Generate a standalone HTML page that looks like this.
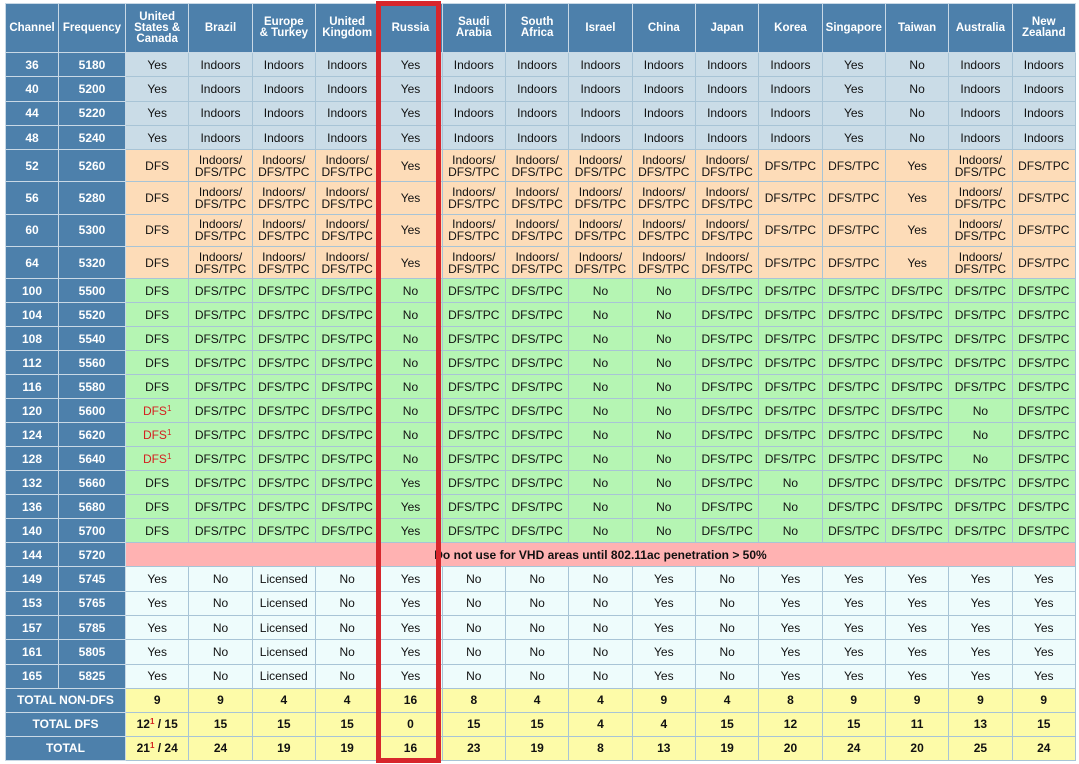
<!DOCTYPE html>
<html><head><meta charset="utf-8"><style>
body{margin:0;background:#fff;width:1079px;height:764px;overflow:hidden;position:relative;font-family:"Liberation Sans",sans-serif}
table{position:absolute;left:5px;top:3px;width:1070px;border-collapse:collapse;table-layout:fixed}
td,th{border:1px solid #a8c4d6;text-align:center;padding:0;font-size:12px;color:#111;line-height:12px;overflow:hidden;white-space:nowrap}
th{background:#4d80ab;color:#fff;font-weight:bold;font-size:11.5px;line-height:11px;height:48px;border-color:#c9d9e6}
td.h{background:#4d80ab;color:#fff;font-weight:bold;border-color:#c9d9e6}
tr.b td{background:#cadce7;height:23.3px}
tr.o td{background:#fddcb8;height:31.3px}
tr.g td{background:#b5f5b3;height:23px}
tr.p td{background:#ffb2b2;height:23px}
tr.w td{background:#eefcfc;height:23.3px}
tr.y td{background:#fdfba8;height:23px;font-weight:bold}
tr td.h{background:#4d80ab}
.r{color:#d42020}
sup{font-size:8px;color:#d42020;vertical-align:4px;line-height:0}
#box{position:absolute;left:376px;top:1px;width:65px;height:762px;border:5px solid #d7262c;box-sizing:border-box}
</style></head><body>
<table>
<colgroup><col style="width:53px"><col style="width:67px"><col span="15" style="width:63.33px"></colgroup>
<tr><th>Channel</th><th>Frequency</th><th>United<br>States &amp;<br>Canada</th><th>Brazil</th><th>Europe<br>&amp; Turkey</th><th>United<br>Kingdom</th><th>Russia</th><th>Saudi<br>Arabia</th><th>South<br>Africa</th><th>Israel</th><th>China</th><th>Japan</th><th>Korea</th><th>Singapore</th><th>Taiwan</th><th>Australia</th><th>New<br>Zealand</th></tr>
<tr class="b"><td class="h">36</td><td class="h">5180</td><td>Yes</td><td>Indoors</td><td>Indoors</td><td>Indoors</td><td>Yes</td><td>Indoors</td><td>Indoors</td><td>Indoors</td><td>Indoors</td><td>Indoors</td><td>Indoors</td><td>Yes</td><td>No</td><td>Indoors</td><td>Indoors</td></tr>
<tr class="b"><td class="h">40</td><td class="h">5200</td><td>Yes</td><td>Indoors</td><td>Indoors</td><td>Indoors</td><td>Yes</td><td>Indoors</td><td>Indoors</td><td>Indoors</td><td>Indoors</td><td>Indoors</td><td>Indoors</td><td>Yes</td><td>No</td><td>Indoors</td><td>Indoors</td></tr>
<tr class="b"><td class="h">44</td><td class="h">5220</td><td>Yes</td><td>Indoors</td><td>Indoors</td><td>Indoors</td><td>Yes</td><td>Indoors</td><td>Indoors</td><td>Indoors</td><td>Indoors</td><td>Indoors</td><td>Indoors</td><td>Yes</td><td>No</td><td>Indoors</td><td>Indoors</td></tr>
<tr class="b"><td class="h">48</td><td class="h">5240</td><td>Yes</td><td>Indoors</td><td>Indoors</td><td>Indoors</td><td>Yes</td><td>Indoors</td><td>Indoors</td><td>Indoors</td><td>Indoors</td><td>Indoors</td><td>Indoors</td><td>Yes</td><td>No</td><td>Indoors</td><td>Indoors</td></tr>
<tr class="o"><td class="h">52</td><td class="h">5260</td><td>DFS</td><td>Indoors/<br>DFS/TPC</td><td>Indoors/<br>DFS/TPC</td><td>Indoors/<br>DFS/TPC</td><td>Yes</td><td>Indoors/<br>DFS/TPC</td><td>Indoors/<br>DFS/TPC</td><td>Indoors/<br>DFS/TPC</td><td>Indoors/<br>DFS/TPC</td><td>Indoors/<br>DFS/TPC</td><td>DFS/TPC</td><td>DFS/TPC</td><td>Yes</td><td>Indoors/<br>DFS/TPC</td><td>DFS/TPC</td></tr>
<tr class="o"><td class="h">56</td><td class="h">5280</td><td>DFS</td><td>Indoors/<br>DFS/TPC</td><td>Indoors/<br>DFS/TPC</td><td>Indoors/<br>DFS/TPC</td><td>Yes</td><td>Indoors/<br>DFS/TPC</td><td>Indoors/<br>DFS/TPC</td><td>Indoors/<br>DFS/TPC</td><td>Indoors/<br>DFS/TPC</td><td>Indoors/<br>DFS/TPC</td><td>DFS/TPC</td><td>DFS/TPC</td><td>Yes</td><td>Indoors/<br>DFS/TPC</td><td>DFS/TPC</td></tr>
<tr class="o"><td class="h">60</td><td class="h">5300</td><td>DFS</td><td>Indoors/<br>DFS/TPC</td><td>Indoors/<br>DFS/TPC</td><td>Indoors/<br>DFS/TPC</td><td>Yes</td><td>Indoors/<br>DFS/TPC</td><td>Indoors/<br>DFS/TPC</td><td>Indoors/<br>DFS/TPC</td><td>Indoors/<br>DFS/TPC</td><td>Indoors/<br>DFS/TPC</td><td>DFS/TPC</td><td>DFS/TPC</td><td>Yes</td><td>Indoors/<br>DFS/TPC</td><td>DFS/TPC</td></tr>
<tr class="o"><td class="h">64</td><td class="h">5320</td><td>DFS</td><td>Indoors/<br>DFS/TPC</td><td>Indoors/<br>DFS/TPC</td><td>Indoors/<br>DFS/TPC</td><td>Yes</td><td>Indoors/<br>DFS/TPC</td><td>Indoors/<br>DFS/TPC</td><td>Indoors/<br>DFS/TPC</td><td>Indoors/<br>DFS/TPC</td><td>Indoors/<br>DFS/TPC</td><td>DFS/TPC</td><td>DFS/TPC</td><td>Yes</td><td>Indoors/<br>DFS/TPC</td><td>DFS/TPC</td></tr>
<tr class="g"><td class="h">100</td><td class="h">5500</td><td>DFS</td><td>DFS/TPC</td><td>DFS/TPC</td><td>DFS/TPC</td><td>No</td><td>DFS/TPC</td><td>DFS/TPC</td><td>No</td><td>No</td><td>DFS/TPC</td><td>DFS/TPC</td><td>DFS/TPC</td><td>DFS/TPC</td><td>DFS/TPC</td><td>DFS/TPC</td></tr>
<tr class="g"><td class="h">104</td><td class="h">5520</td><td>DFS</td><td>DFS/TPC</td><td>DFS/TPC</td><td>DFS/TPC</td><td>No</td><td>DFS/TPC</td><td>DFS/TPC</td><td>No</td><td>No</td><td>DFS/TPC</td><td>DFS/TPC</td><td>DFS/TPC</td><td>DFS/TPC</td><td>DFS/TPC</td><td>DFS/TPC</td></tr>
<tr class="g"><td class="h">108</td><td class="h">5540</td><td>DFS</td><td>DFS/TPC</td><td>DFS/TPC</td><td>DFS/TPC</td><td>No</td><td>DFS/TPC</td><td>DFS/TPC</td><td>No</td><td>No</td><td>DFS/TPC</td><td>DFS/TPC</td><td>DFS/TPC</td><td>DFS/TPC</td><td>DFS/TPC</td><td>DFS/TPC</td></tr>
<tr class="g"><td class="h">112</td><td class="h">5560</td><td>DFS</td><td>DFS/TPC</td><td>DFS/TPC</td><td>DFS/TPC</td><td>No</td><td>DFS/TPC</td><td>DFS/TPC</td><td>No</td><td>No</td><td>DFS/TPC</td><td>DFS/TPC</td><td>DFS/TPC</td><td>DFS/TPC</td><td>DFS/TPC</td><td>DFS/TPC</td></tr>
<tr class="g"><td class="h">116</td><td class="h">5580</td><td>DFS</td><td>DFS/TPC</td><td>DFS/TPC</td><td>DFS/TPC</td><td>No</td><td>DFS/TPC</td><td>DFS/TPC</td><td>No</td><td>No</td><td>DFS/TPC</td><td>DFS/TPC</td><td>DFS/TPC</td><td>DFS/TPC</td><td>DFS/TPC</td><td>DFS/TPC</td></tr>
<tr class="g"><td class="h">120</td><td class="h">5600</td><td class="r">DFS<sup>1</sup></td><td>DFS/TPC</td><td>DFS/TPC</td><td>DFS/TPC</td><td>No</td><td>DFS/TPC</td><td>DFS/TPC</td><td>No</td><td>No</td><td>DFS/TPC</td><td>DFS/TPC</td><td>DFS/TPC</td><td>DFS/TPC</td><td>No</td><td>DFS/TPC</td></tr>
<tr class="g"><td class="h">124</td><td class="h">5620</td><td class="r">DFS<sup>1</sup></td><td>DFS/TPC</td><td>DFS/TPC</td><td>DFS/TPC</td><td>No</td><td>DFS/TPC</td><td>DFS/TPC</td><td>No</td><td>No</td><td>DFS/TPC</td><td>DFS/TPC</td><td>DFS/TPC</td><td>DFS/TPC</td><td>No</td><td>DFS/TPC</td></tr>
<tr class="g"><td class="h">128</td><td class="h">5640</td><td class="r">DFS<sup>1</sup></td><td>DFS/TPC</td><td>DFS/TPC</td><td>DFS/TPC</td><td>No</td><td>DFS/TPC</td><td>DFS/TPC</td><td>No</td><td>No</td><td>DFS/TPC</td><td>DFS/TPC</td><td>DFS/TPC</td><td>DFS/TPC</td><td>No</td><td>DFS/TPC</td></tr>
<tr class="g"><td class="h">132</td><td class="h">5660</td><td>DFS</td><td>DFS/TPC</td><td>DFS/TPC</td><td>DFS/TPC</td><td>Yes</td><td>DFS/TPC</td><td>DFS/TPC</td><td>No</td><td>No</td><td>DFS/TPC</td><td>No</td><td>DFS/TPC</td><td>DFS/TPC</td><td>DFS/TPC</td><td>DFS/TPC</td></tr>
<tr class="g"><td class="h">136</td><td class="h">5680</td><td>DFS</td><td>DFS/TPC</td><td>DFS/TPC</td><td>DFS/TPC</td><td>Yes</td><td>DFS/TPC</td><td>DFS/TPC</td><td>No</td><td>No</td><td>DFS/TPC</td><td>No</td><td>DFS/TPC</td><td>DFS/TPC</td><td>DFS/TPC</td><td>DFS/TPC</td></tr>
<tr class="g"><td class="h">140</td><td class="h">5700</td><td>DFS</td><td>DFS/TPC</td><td>DFS/TPC</td><td>DFS/TPC</td><td>Yes</td><td>DFS/TPC</td><td>DFS/TPC</td><td>No</td><td>No</td><td>DFS/TPC</td><td>No</td><td>DFS/TPC</td><td>DFS/TPC</td><td>DFS/TPC</td><td>DFS/TPC</td></tr>
<tr class="p"><td class="h">144</td><td class="h">5720</td><td colspan="15" style="font-weight:bold">Do not use for VHD areas until 802.11ac penetration &gt; 50%</td></tr>
<tr class="w"><td class="h">149</td><td class="h">5745</td><td>Yes</td><td>No</td><td>Licensed</td><td>No</td><td>Yes</td><td>No</td><td>No</td><td>No</td><td>Yes</td><td>No</td><td>Yes</td><td>Yes</td><td>Yes</td><td>Yes</td><td>Yes</td></tr>
<tr class="w"><td class="h">153</td><td class="h">5765</td><td>Yes</td><td>No</td><td>Licensed</td><td>No</td><td>Yes</td><td>No</td><td>No</td><td>No</td><td>Yes</td><td>No</td><td>Yes</td><td>Yes</td><td>Yes</td><td>Yes</td><td>Yes</td></tr>
<tr class="w"><td class="h">157</td><td class="h">5785</td><td>Yes</td><td>No</td><td>Licensed</td><td>No</td><td>Yes</td><td>No</td><td>No</td><td>No</td><td>Yes</td><td>No</td><td>Yes</td><td>Yes</td><td>Yes</td><td>Yes</td><td>Yes</td></tr>
<tr class="w"><td class="h">161</td><td class="h">5805</td><td>Yes</td><td>No</td><td>Licensed</td><td>No</td><td>Yes</td><td>No</td><td>No</td><td>No</td><td>Yes</td><td>No</td><td>Yes</td><td>Yes</td><td>Yes</td><td>Yes</td><td>Yes</td></tr>
<tr class="w"><td class="h">165</td><td class="h">5825</td><td>Yes</td><td>No</td><td>Licensed</td><td>No</td><td>Yes</td><td>No</td><td>No</td><td>No</td><td>Yes</td><td>No</td><td>Yes</td><td>Yes</td><td>Yes</td><td>Yes</td><td>Yes</td></tr>
<tr class="y"><td class="h" colspan="2">TOTAL NON-DFS</td><td>9</td><td>9</td><td>4</td><td>4</td><td>16</td><td>8</td><td>4</td><td>4</td><td>9</td><td>4</td><td>8</td><td>9</td><td>9</td><td>9</td><td>9</td></tr>
<tr class="y"><td class="h" colspan="2">TOTAL DFS</td><td>12<sup>1</sup> / 15</td><td>15</td><td>15</td><td>15</td><td>0</td><td>15</td><td>15</td><td>4</td><td>4</td><td>15</td><td>12</td><td>15</td><td>11</td><td>13</td><td>15</td></tr>
<tr class="y"><td class="h" colspan="2">TOTAL</td><td>21<sup>1</sup> / 24</td><td>24</td><td>19</td><td>19</td><td>16</td><td>23</td><td>19</td><td>8</td><td>13</td><td>19</td><td>20</td><td>24</td><td>20</td><td>25</td><td>24</td></tr>
</table>
<div id="box"></div>
</body></html>
